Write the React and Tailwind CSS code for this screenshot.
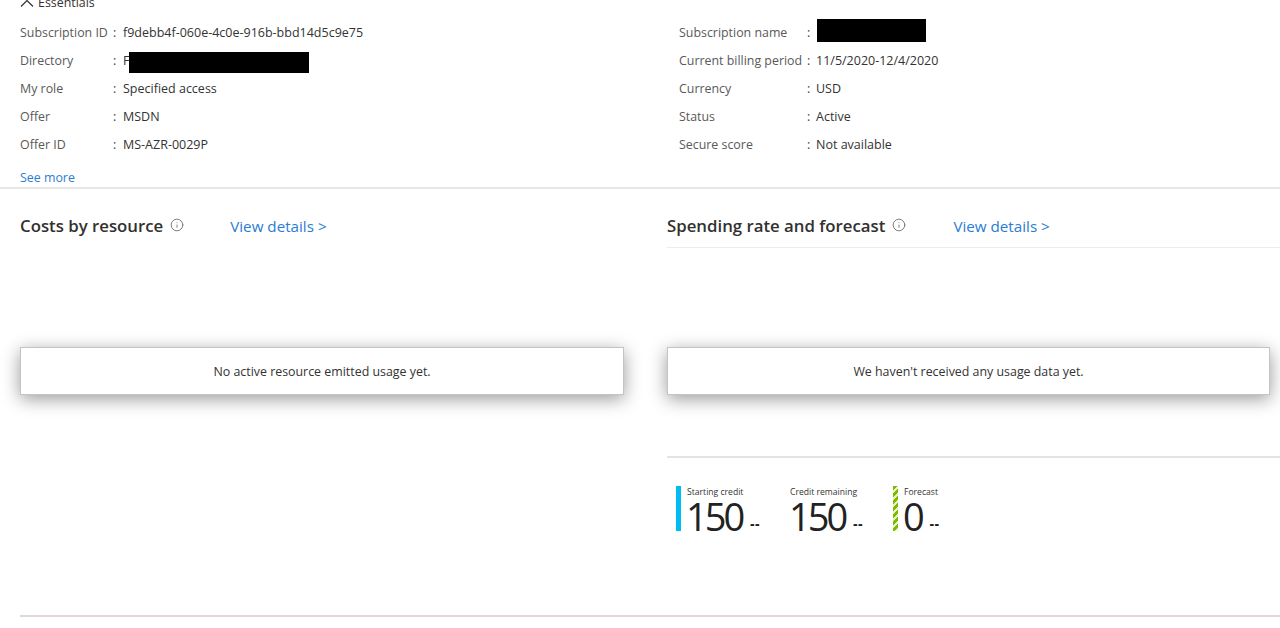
import { Info } from "lucide-react";

const leftRows = [
  { label: "Subscription ID", value: "f9debb4f-060e-4c0e-916b-bbd14d5c9e75" },
  { label: "Directory", value: "F", redact: "w-[180px] h-[21px] mt-[2px]" },
  { label: "My role", value: "Specified access" },
  { label: "Offer", value: "MSDN" },
  { label: "Offer ID", value: "MS-AZR-0029P" },
];

const rightRows = [
  { label: "Subscription name", redact: "w-[109px] h-[23px] -mt-[5px] ml-[1px]" },
  { label: "Current billing period", value: "11/5/2020-12/4/2020" },
  { label: "Currency", value: "USD" },
  { label: "Status", value: "Active" },
  { label: "Secure score", value: "Not available" },
];

function Row({ row, labelWidth, colonWidth }) {
  return (
    <div className="flex items-center h-[28px] text-[12.4px]">
      <div className={`${labelWidth} text-[#595959] whitespace-nowrap`}>{row.label}</div>
      <div className={`${colonWidth} text-[#444]`}>:</div>
      {row.value && <span className="text-[12.5px] text-[#333]">{row.value}</span>}
      {row.redact && <div className={`${row.redact} bg-black`}></div>}
    </div>
  );
}

function SectionHead({ title, gap }) {
  return (
    <div className="flex items-center h-[28px]">
      <h2 className="text-[16.8px] font-semibold text-[#323130] whitespace-nowrap">{title}</h2>
      <Info className="w-[14px] h-[14px] text-[#6e6e6e] ml-[7px] -mt-[3px]" strokeWidth={1.5} />
      <a className={`${gap} text-[15.2px] text-[#2b7cd3] whitespace-nowrap`}>View details &gt;</a>
    </div>
  );
}

function Metric({ label, value, bar, width }) {
  return (
    <div className={`flex ${width}`}>
      <div className="w-[5px] h-[45px] mr-[6px]" style={bar}></div>
      <div>
        <div className="text-[8.6px] leading-[13px] text-[#333] whitespace-nowrap">{label}</div>
        <div className="flex items-end mt-[1px] h-[32px]">
          <span className="text-[38px] leading-[32px] -ml-[1px] text-[#222] tracking-[-3px]">{value}</span>
          <span className="text-[13px] leading-[17px] font-extrabold text-[#222] ml-[8px] tracking-[1px]">--</span>
        </div>
      </div>
    </div>
  );
}

function NoticeBox({ text }) {
  return (
    <div className="h-[48px] pt-[2px] bg-white border border-[#c4c4c4] flex items-center justify-center text-[12.4px] text-[#333] shadow-[0_4px_18px_rgba(0,0,0,0.4)]">
      {text}
    </div>
  );
}

export default function App() {
  return (
    <div
      className="w-[1280px] h-[628px] overflow-hidden bg-white"
      style={{ fontFamily: '"Open Sans", "Noto Sans", sans-serif' }}
    >
      {/* Essentials */}
      <div className="flex items-center h-[18px] -mt-[6px] pl-[20px] text-[12.4px] text-[#333]">
        <svg width="14" height="9" viewBox="0 0 14 9" fill="none" stroke="#333" strokeWidth="1.2">
          <path d="M1 7.5 7 1.5l6 6" />
        </svg>
        <span className="ml-[4px]">Essentials</span>
      </div>

      <div className="flex mt-[7px] pl-[20px]">
        <div className="w-[659px]">
          {leftRows.map((row) => (
            <Row key={row.label} row={row} labelWidth="w-[93px]" colonWidth="w-[10px]" />
          ))}
        </div>
        <div>
          {rightRows.map((row) => (
            <Row key={row.label} row={row} labelWidth="w-[128px]" colonWidth="w-[9px]" />
          ))}
        </div>
      </div>

      <div className="pl-[20px] mt-[10px] h-[18px] leading-[18px] text-[12.4px] text-[#2b7cd3]">See more</div>
      <div className="h-[2px] bg-[#e5e5e5]"></div>

      {/* Charts */}
      <div className="flex">
        <div className="w-[667px] pl-[20px] pr-[43px]">
          <div className="pt-[23px]">
            <SectionHead title="Costs by resource" gap="ml-[46px]" />
          </div>
          <div className="mt-[107px]">
            <NoticeBox text="No active resource emitted usage yet." />
          </div>
        </div>

        <div className="flex-1">
          <div className="pt-[23px] h-[59px] border-b border-[#ececec]">
            <SectionHead title="Spending rate and forecast" gap="ml-[47px]" />
          </div>
          <div className="mt-[99px] mr-[10px]">
            <NoticeBox text="We haven't received any usage data yet." />
          </div>
          <div className="h-[2px] bg-[#e3e3e3] mt-[61px]"></div>
          <div className="flex pl-[9px] pt-[28px]">
            <Metric label="Starting credit" value="150" bar={{ background: "#00bcf2" }} width="w-[103px]" />
            <Metric label="Credit remaining" value="150" bar={{ background: "transparent" }} width="w-[114px]" />
            <Metric
              label="Forecast"
              value="0"
              bar={{ background: "repeating-linear-gradient(135deg, #7fba00 0 3px, #e4f2c0 3px 5px)" }}
              width=""
            />
          </div>
        </div>
      </div>

      <div className="ml-[20px] h-[2px] bg-[#e0d8da] mt-[83px]"></div>
    </div>
  );
}
